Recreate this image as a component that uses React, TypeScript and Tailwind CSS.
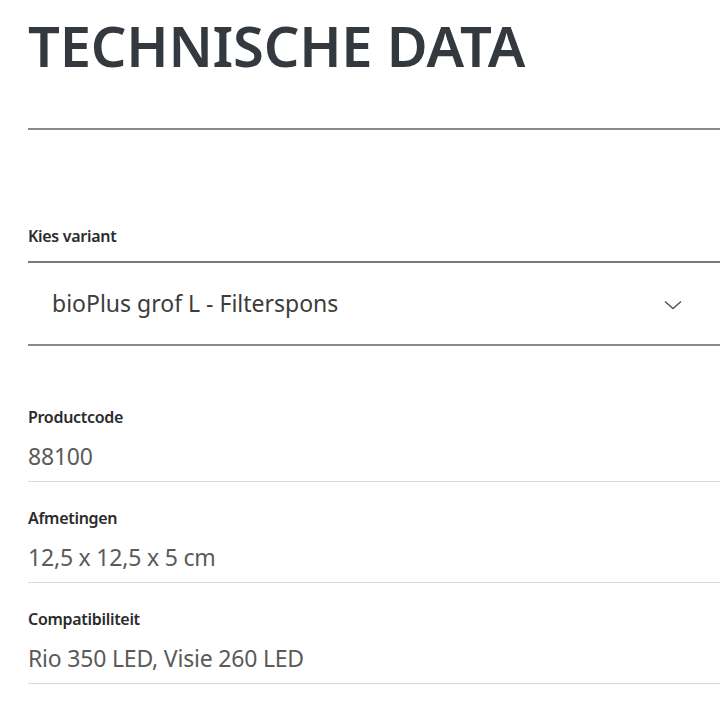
import React from 'react';

const rows = [
  { label: 'Productcode', value: '88100' },
  { label: 'Afmetingen', value: '12,5 x 12,5 x 5 cm' },
  { label: 'Compatibiliteit', value: 'Rio 350 LED, Visie 260 LED' },
];

export default function App() {
  return (
    <div className="w-[720px] h-[720px] bg-white overflow-hidden pl-[28px] font-['Noto_Sans',sans-serif]">
      {/* Heading */}
      <h1 className="pt-[11px] text-[56px] leading-[68px] font-semibold text-[#33393e] tracking-[-0.2px]">
        TECHNISCHE DATA
      </h1>
      <div className="mt-[49px] h-[2px] bg-[#8a8a8a]" />

      {/* Variant select */}
      <div className="mt-[96px]">
        <p className="text-[16px] leading-[20px] font-semibold text-[#2b2b2b] tracking-[-0.3px]">Kies variant</p>
        <div className="mt-[15px] h-[2px] bg-[#7a7a7a]" />
        <div className="h-[81px] flex items-center justify-between pl-[24px] pr-[38px]">
          <span className="text-[23px] text-[#3c3c3c] tracking-[0px]">bioPlus grof L - Filterspons</span>
          <svg width="18" height="10" viewBox="0 0 18 10" fill="none" className="mt-[2px]">
            <path d="M1 1.5 L9 8.5 L17 1.5" stroke="#555" strokeWidth="1.5" />
          </svg>
        </div>
        <div className="h-[2px] bg-[#8a8a8a]" />
      </div>

      {/* Data rows */}
      <div className="mt-[61px]">
        {rows.map((r, i) => (
          <div key={r.label} className={i > 0 ? 'pt-[26px]' : ''}>
            <p className="text-[16px] leading-[20px] font-semibold text-[#2b2b2b] tracking-[-0.3px]">{r.label}</p>
            <p className="mt-[14px] text-[23px] leading-[30px] text-[#5a5a5a] tracking-[-0.2px]">{r.value}</p>
            <div className="mt-[10px] h-[1px] bg-[#d9d9d9]" />
          </div>
        ))}
      </div>
    </div>
  );
}
